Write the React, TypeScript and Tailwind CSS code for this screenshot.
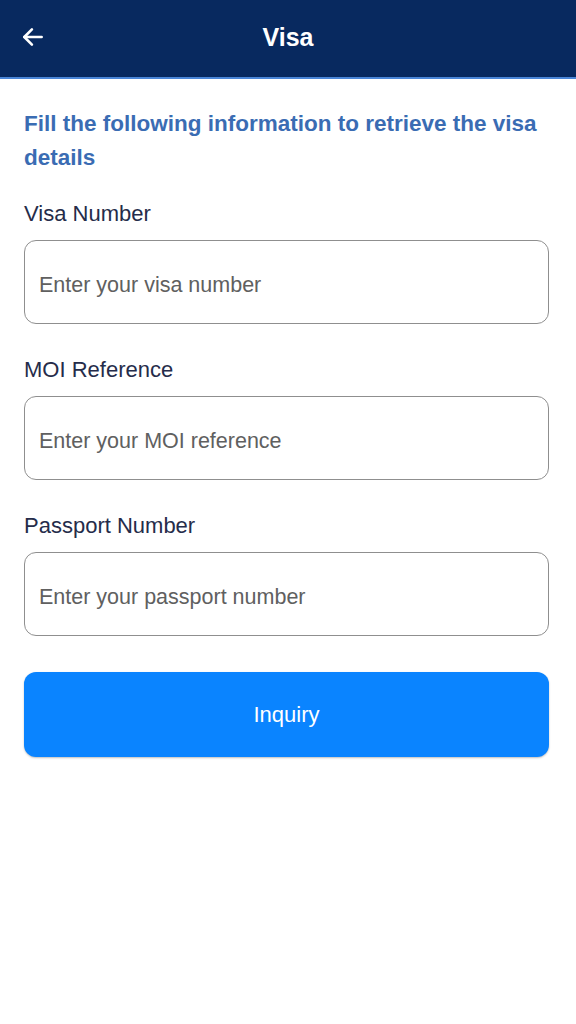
import { useState } from "react";

type Field = {
  key: string;
  label: string;
  placeholder: string;
};

const fields: Field[] = [
  { key: "visa", label: "Visa Number", placeholder: "Enter your visa number" },
  { key: "moi", label: "MOI Reference", placeholder: "Enter your MOI reference" },
  { key: "passport", label: "Passport Number", placeholder: "Enter your passport number" },
];

function BackArrow() {
  return (
    <svg width="26" height="26" viewBox="0 0 24 24" fill="none" stroke="white" strokeWidth="2.4" strokeLinecap="round" strokeLinejoin="round" aria-hidden>
      <path d="M20 12H4" />
      <path d="M11 5l-7 7 7 7" />
    </svg>
  );
}

export default function App() {
  const [values, setValues] = useState<Record<string, string>>({});

  return (
    <div className="min-h-[1024px] w-full bg-white font-['Liberation_Sans',Arial,sans-serif]">
      <header className="relative flex h-[79px] items-center justify-center border-b-2 border-[#4a86d8] bg-[#08295f]">
        <button type="button" className="absolute left-[20px] top-[24px]">
          <BackArrow />
        </button>
        <h1 className="-mt-[2px] text-[25px] font-bold text-white">Visa</h1>
      </header>

      <main className="pl-6 pr-[27px] pt-[28px]">
        <p className="text-[22.5px] font-bold leading-[34px] text-[#3a6cb3]">
          Fill the following information to retrieve the visa details
        </p>

        <div className="mt-[25px] flex flex-col gap-[32px]">
          {fields.map((f) => (
            <div key={f.key} className="flex flex-col gap-[12px]">
              <label className="text-[22px] leading-[28px] text-[#252c4a]">{f.label}</label>
              <input
                type="text"
                value={values[f.key] ?? ""}
                onChange={(e) => setValues((prev) => ({ ...prev, [f.key]: e.target.value }))}
                placeholder={f.placeholder}
                className="h-[84px] w-full rounded-[12px] border border-[#8f8f8f] px-[14px] pt-[6px] text-[21.5px] text-[#333] placeholder:text-[#606060] outline-none"
              />
            </div>
          ))}
        </div>

        <button
          type="button"
          className="mt-[36px] h-[85px] w-full rounded-[12px] bg-[#0a84ff] text-[22px] font-light text-white shadow-[0_1px_2px_rgba(0,0,0,0.25)]"
        >
          Inquiry
        </button>
      </main>
    </div>
  );
}
